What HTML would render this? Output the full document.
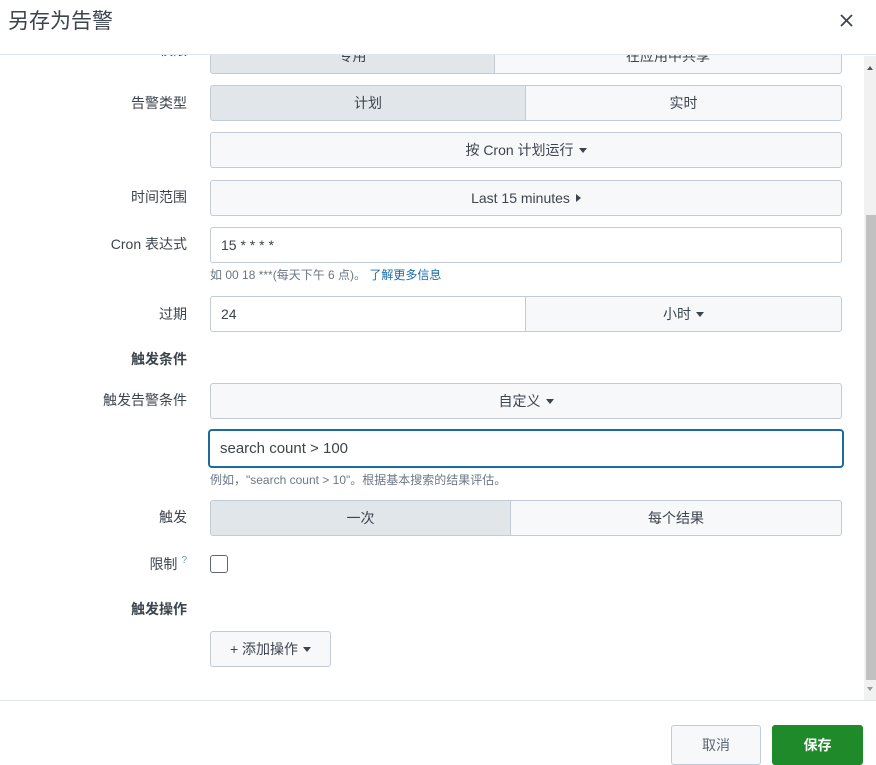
<!DOCTYPE html>
<html><head><meta charset="utf-8"><style>
*{box-sizing:border-box;margin:0;padding:0}
body{width:876px;height:758px;position:relative;overflow:hidden;background:#fff;font-family:"Liberation Sans","Noto Sans CJK SC",sans-serif;color:#3c444d;font-size:14px}
.a{position:absolute}
.lbl{position:absolute;right:689px;font-size:14px;color:#3c444d;white-space:nowrap}
.b{position:absolute;border:1px solid #c3cbd4;border-radius:3px;background:#f7f8fa;display:flex;align-items:center;justify-content:center;color:#3c444d;font-size:14px}
.on{background:#e1e6eb}
.inp{position:absolute;border:1px solid #c3cbd4;border-radius:3px;background:#fff;display:flex;align-items:center;padding-left:10px;font-size:14px;color:#3c444d}
.car{display:inline-block;width:0;height:0;border-left:4px solid transparent;border-right:4px solid transparent;border-top:5px solid #3c444d;margin-left:5px;vertical-align:middle}
.help{position:absolute;left:210px;font-size:12px;color:#6b7785}
.bold{font-weight:bold;color:#3c444d}
</style></head><body>
<div class="a" style="left:0;top:0;width:876px;height:55px;border-bottom:1px solid #e1e6eb;z-index:2;background:#fff"></div>
<div class="a" style="left:8px;top:5px;font-size:21px;color:#3c444d;z-index:3">另存为告警</div>
<svg class="a" style="left:840px;top:14px;z-index:3" width="13" height="13" viewBox="0 0 13 13"><path d="M1 1L12 12M12 1L1 12" stroke="#3c444d" stroke-width="1.8"/></svg>

<div class="b on" style="left:210px;top:38px;width:285px;height:36px;border-radius:3px 0 0 3px">专用</div>
<div class="b" style="left:494px;top:38px;width:348px;height:36px;border-radius:0 3px 3px 0">在应用中共享</div>
<div class="lbl" style="top:40px">权限</div>

<div class="lbl" style="top:93px">告警类型</div>
<div class="b on" style="left:210px;top:85px;width:316px;height:36px;border-radius:3px 0 0 3px">计划</div>
<div class="b" style="left:525px;top:85px;width:317px;height:36px;border-radius:0 3px 3px 0">实时</div>

<div class="b" style="left:210px;top:132px;width:632px;height:36px">按 Cron 计划运行<span class="car"></span></div>

<div class="lbl" style="top:187px">时间范围</div>
<div class="b" style="left:210px;top:180px;width:632px;height:36px">Last 15 minutes<span style="display:inline-block;border-top:4px solid transparent;border-bottom:4px solid transparent;border-left:5px solid #3c444d;margin-left:6px"></span></div>

<div class="lbl" style="top:234px">Cron 表达式</div>
<div class="inp" style="left:210px;top:227px;width:632px;height:36px">15 * * * *</div>
<div class="help" style="top:266px">如 00 18 ***(每天下午 6 点)。 <span style="color:#1a6ea8">了解更多信息</span></div>

<div class="lbl" style="top:304px">过期</div>
<div class="inp" style="left:210px;top:296px;width:316px;height:36px;border-radius:3px 0 0 3px">24</div>
<div class="b" style="left:525px;top:296px;width:317px;height:36px;border-radius:0 3px 3px 0">小时<span class="car"></span></div>

<div class="lbl bold" style="top:349px">触发条件</div>

<div class="lbl" style="top:390px">触发告警条件</div>
<div class="b" style="left:210px;top:383px;width:632px;height:36px">自定义<span class="car"></span></div>

<div class="inp" style="left:208px;top:429px;width:636px;height:39px;border:2px solid #1b6aa0;border-radius:4px;font-size:15px">search count &gt; 100</div>
<div class="help" style="top:471px">例如，"search count &gt; 10"。根据基本搜索的结果评估。</div>

<div class="lbl" style="top:507px">触发</div>
<div class="b on" style="left:210px;top:500px;width:301px;height:36px;border-radius:3px 0 0 3px">一次</div>
<div class="b" style="left:510px;top:500px;width:332px;height:36px;border-radius:0 3px 3px 0">每个结果</div>

<div class="lbl" style="top:554px">限制<sup style="color:#5a9bd0;font-size:10px;margin-left:4px">?</sup></div>
<div class="a" style="left:210px;top:555px;width:18px;height:18px;border:1px solid #5c6773;border-radius:3px"></div>

<div class="lbl bold" style="top:599px">触发操作</div>
<div class="b" style="left:210px;top:631px;width:121px;height:36px">+ 添加操作<span class="car"></span></div>

<div class="a" style="left:864px;top:56px;width:12px;height:644px;background:#f1f1f1"></div>
<div class="a" style="left:866px;top:215px;width:10px;height:465px;background:#c1c1c1"></div>
<div class="a" style="left:867px;top:66px;border-left:3px solid transparent;border-right:3px solid transparent;border-bottom:4px solid #555"></div>
<div class="a" style="left:867px;top:687px;border-left:3px solid transparent;border-right:3px solid transparent;border-top:4px solid #999"></div>

<div class="a" style="left:0;top:700px;width:876px;height:1px;background:#e1e6eb"></div>
<div class="b" style="left:671px;top:725px;width:90px;height:40px;color:#5c6773">取消</div>
<div class="a" style="left:772px;top:725px;width:91px;height:40px;background:#1e8a2a;border-radius:3px;color:#fff;display:flex;align-items:center;justify-content:center;font-weight:bold;font-size:14px">保存</div>
</body></html>
